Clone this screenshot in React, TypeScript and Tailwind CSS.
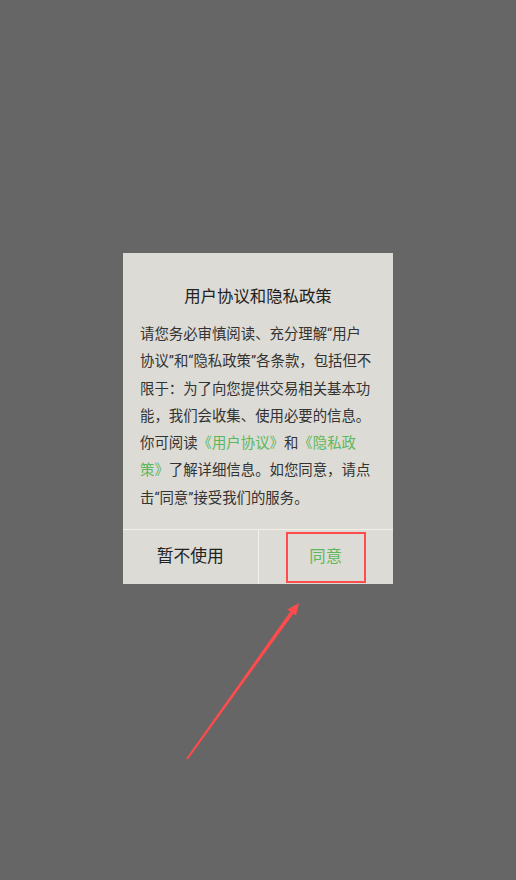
const lines: { text: string; green?: boolean }[][] = [
  [{ text: "请您务必审慎阅读、充分理解“用户" }],
  [{ text: "协议”和“隐私政策”各条款，包括但不" }],
  [{ text: "限于：为了向您提供交易相关基本功" }],
  [{ text: "能，我们会收集、使用必要的信息。" }],
  [
    { text: "你可阅读" },
    { text: "《用户协议》", green: true },
    { text: "和" },
    { text: "《隐私政", green: true },
  ],
  [{ text: "策》", green: true }, { text: "了解详细信息。如您同意，请点" }],
  [{ text: "击“同意”接受我们的服务。" }],
];

export default function App() {
  return (
    <div
      className="relative min-h-[880px] w-full bg-[#666666] flex justify-center pt-[253px]"
      style={{ fontFamily: '"Roboto", "Noto Sans CJK SC", sans-serif' }}
    >
      {/* Dialog */}
      <div className="w-[270px] h-fit bg-[#dcdbd6] flex flex-col">
        <div className="pt-[32px] text-center text-[16.4px] leading-[24px] text-[#222]">用户协议和隐私政策</div>
        <div className="mt-[12px] pl-[17px] pb-[17px] text-[14.4px] leading-[27.3px] text-[#333]">
          {lines.map((line, i) => (
            <div key={i} className="whitespace-nowrap">
              {line.map((seg, j) => (
                <span key={j} className={seg.green ? "text-[#5cb85c]" : ""}>
                  {seg.text}
                </span>
              ))}
            </div>
          ))}
        </div>
        <div className="flex h-[55px] border-t border-[#f1f0ec]">
          <button className="flex-1 flex items-center justify-center text-[16.8px] text-[#222] border-r border-[#f1f0ec]">
            暂不使用
          </button>
          <button className="relative flex-1 flex items-center justify-center text-[16.4px] text-[#5cb85c]">
            同意
            <span className="absolute left-1/2 -translate-x-1/2 top-[2px] w-[80px] h-[51px] border-2 border-[#ff4b4b]" />
          </button>
        </div>
      </div>

      {/* Annotation arrow */}
      <svg className="absolute left-0 top-0 pointer-events-none" width="516" height="880" viewBox="0 0 516 880">
        <polygon points="186.2,758.4 187.8,759.6 293.5,613.5 290.5,611.3" fill="#ff4b4b" />
        <polygon points="299,603 296,615.5 287.5,609.5" fill="#ff4b4b" />
      </svg>
    </div>
  );
}
